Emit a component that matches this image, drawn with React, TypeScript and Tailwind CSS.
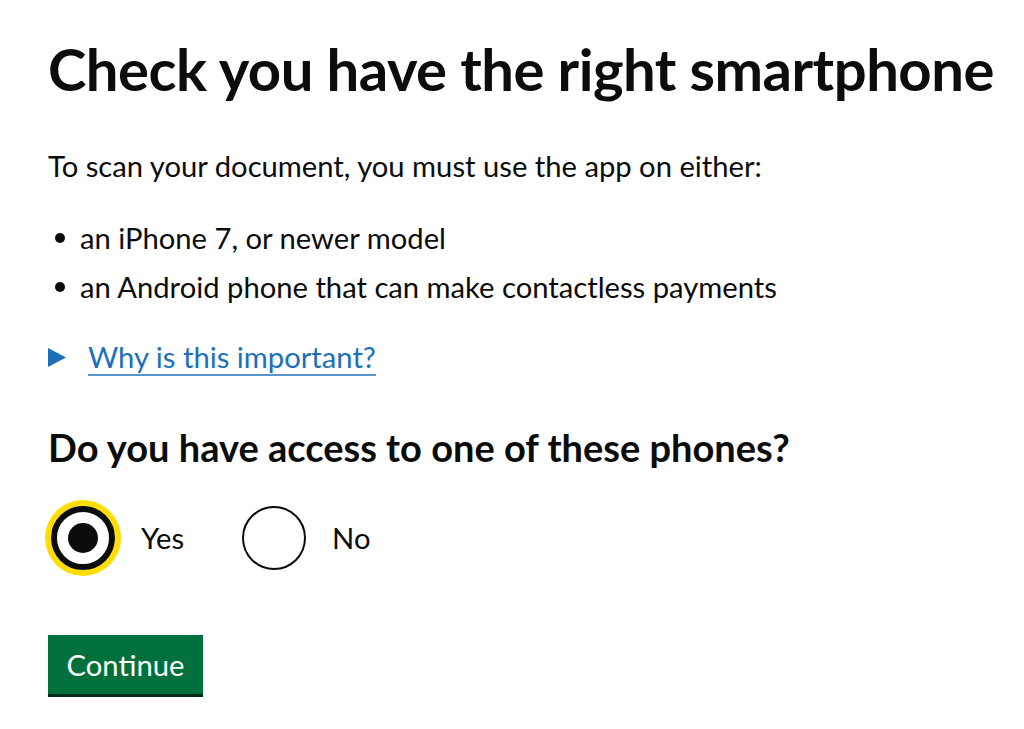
import React from "react";

export default function App() {
  return (
    <div className="min-h-[729px] bg-white px-[48px] pt-[37px] text-[#0b0c0c] font-['Lato','Noto_Sans',sans-serif]">
      <h1 className="whitespace-nowrap text-[58px] leading-[64px] font-bold tracking-[-0.5px]">
        Check you have the right smartphone
      </h1>
      <p className="mt-[45px] text-[29.2px] leading-[40px]">
        To scan your document, you must use the app on either:
      </p>
      <ul className="mt-[32px] flex flex-col gap-[9px] text-[29.2px] leading-[40px]">
        <li className="flex items-center">
          <span className="ml-[7px] mr-[15px] h-[10px] w-[10px] rounded-full bg-[#0b0c0c]" />
          an iPhone 7, or newer model
        </li>
        <li className="flex items-center">
          <span className="ml-[7px] mr-[15px] h-[10px] w-[10px] rounded-full bg-[#0b0c0c]" />
          an Android phone that can make contactless payments
        </li>
      </ul>
      <div className="mt-[30px] flex items-center text-[29.2px] leading-[40px]">
        <svg width="18" height="19" viewBox="0 0 18 19" className="mr-[22px]">
          <polygon points="0,0 18,9.5 0,19" fill="#1d70b8" />
        </svg>
        <span className="text-[#1d70b8] underline decoration-[2px] underline-offset-[6px] decoration-[#5694ca]">
          Why is this important?
        </span>
      </div>
      <fieldset className="mt-[48px]">
        <legend className="text-[38px] leading-[44px] font-bold">
          Do you have access to one of these phones?
        </legend>
        <div className="mt-[37px] flex items-center">
          <div className="flex items-center">
            <span className="ml-[3px] flex h-[64px] w-[64px] items-center justify-center rounded-full border-[6px] border-[#0b0c0c] shadow-[0_0_0_6px_#ffdd00]">
              <span className="h-[30px] w-[30px] rounded-full bg-[#0b0c0c]" />
            </span>
            <span className="ml-[26px] text-[29.2px] leading-[40px]">Yes</span>
          </div>
          <div className="ml-[58px] flex items-center">
            <span className="h-[64px] w-[64px] rounded-full border-2 border-[#0b0c0c]" />
            <span className="ml-[26px] text-[29.2px] leading-[40px]">No</span>
          </div>
        </div>
      </fieldset>
      <button className="mt-[65px] flex h-[59px] w-[155px] items-center justify-center bg-[#00703c] text-[29.2px] leading-[40px] text-white shadow-[0_3px_0_#002d18]">
        Continue
      </button>
    </div>
  );
}
